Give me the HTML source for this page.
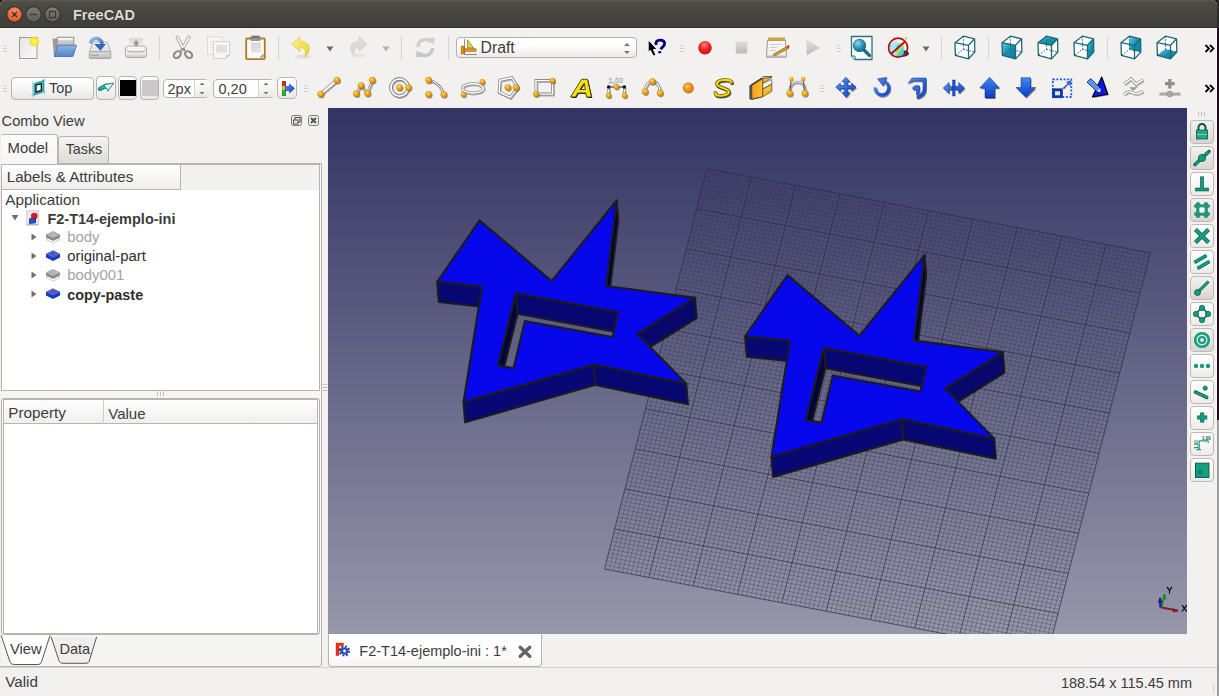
<!DOCTYPE html><html><head><meta charset="utf-8"><style>html,body{margin:0;padding:0;width:1219px;height:696px;overflow:hidden;background:#1f0b17;font-family:"Liberation Sans",sans-serif;}</style></head><body><div style="position:absolute;left:0px;top:0px;width:1217px;height:696px;background:#f2f1f0;border-radius:5px 5px 0 0;overflow:hidden;"></div><div style="position:absolute;left:1217px;top:0px;width:2px;height:28px;background:#2c2b28;"></div><div style="position:absolute;left:1217px;top:420px;width:2px;height:276px;background:#9c9c9c;"></div><div style="position:absolute;left:1216px;top:28px;width:1px;height:392px;background:#fbfbfa;"></div><div style="position:absolute;left:0px;top:0px;width:1217px;height:28px;background:linear-gradient(#5a5750 0px,#5a5750 1px,#4e4c46 2px,#3e3d38);border-radius:5px 5px 0 0;"></div><div style="position:absolute;left:0px;top:27px;width:1217px;height:1px;background:#2e2d2a;"></div><svg style="position:absolute;left:0px;top:0px;overflow:visible" width="70" height="28" viewBox="0 0 70 28"><defs><radialGradient id="tbc" cx="0.5" cy="0.2" r="0.9"><stop offset="0" stop-color="#f58a63"/><stop offset="1" stop-color="#e04f1d"/></radialGradient><linearGradient id="tbg" x1="0" y1="0" x2="0" y2="1"><stop offset="0" stop-color="#7c7b76"/><stop offset="1" stop-color="#5c5b56"/></linearGradient></defs><circle cx="14.5" cy="14.5" r="8.2" fill="#2f2e2a"/><circle cx="14.5" cy="14.5" r="7.2" fill="url(#tbc)"/><path d="M12 12L17 17M17 12L12 17" stroke="#3a2a22" stroke-width="1.2"/><circle cx="33.5" cy="14.5" r="8.2" fill="#2f2e2a"/><circle cx="33.5" cy="14.5" r="7.2" fill="url(#tbg)"/><path d="M30 14.5H37" stroke="#3a3935" stroke-width="1.3"/><circle cx="52.5" cy="14.5" r="8.2" fill="#2f2e2a"/><circle cx="52.5" cy="14.5" r="7.2" fill="url(#tbg)"/><rect x="49.5" y="11.5" width="6" height="6" fill="none" stroke="#3a3935" stroke-width="1.2"/></svg><div style="position:absolute;left:73px;top:7.53px;font-size:14.5px;line-height:14.5px;color:#dfdbd2;white-space:nowrap;font-weight:bold;text-shadow:0 0 1px #222;">FreeCAD</div><div style="position:absolute;left:3px;top:45px;width:4px;height:1px;background:#d3cfc9;"></div><div style="position:absolute;left:3px;top:48px;width:4px;height:1px;background:#d3cfc9;"></div><div style="position:absolute;left:3px;top:51px;width:4px;height:1px;background:#d3cfc9;"></div><svg style="position:absolute;left:15px;top:33px;overflow:visible" width="28" height="28" viewBox="0 0 28 28"><defs><linearGradient id="nd" x1="0" y1="0" x2="1" y2="1"><stop offset="0" stop-color="#e4e4e4"/><stop offset="1" stop-color="#fafafa"/></linearGradient><radialGradient id="glow"><stop offset="0" stop-color="#ffffe0"/><stop offset="0.25" stop-color="#faf040"/><stop offset="0.7" stop-color="#f0e020" stop-opacity="0.85"/><stop offset="1" stop-color="#f0e830" stop-opacity="0"/></radialGradient></defs><rect x="4.5" y="4.5" width="17.5" height="21" fill="url(#nd)" stroke="#9c9c9c" stroke-width="1"/><circle cx="19.3" cy="8.5" r="5.8" fill="url(#glow)"/></svg><svg style="position:absolute;left:48px;top:33px;overflow:visible" width="32" height="28" viewBox="0 0 32 28"><defs><linearGradient id="opp" x1="0" y1="0" x2="0" y2="1"><stop offset="0" stop-color="#e0e0e0"/><stop offset="1" stop-color="#a8a8a8"/></linearGradient><linearGradient id="fo" x1="0" y1="0" x2="0" y2="1"><stop offset="0" stop-color="#8fb4e3"/><stop offset="1" stop-color="#4f86c9"/></linearGradient></defs><path d="M4.5 5.5H9L9 24H6Z" fill="#9a9a9a"/><rect x="9.2" y="4.2" width="16.6" height="12" fill="url(#opp)" stroke="#8a8a8a" stroke-width="0.9"/><rect x="10.2" y="5.2" width="14.6" height="1.5" fill="#fff"/><path d="M6.5 23.5L10 12.2H28.5L25 23.5Z" fill="url(#fo)" stroke="#3f6fb2" stroke-width="0.8"/></svg><svg style="position:absolute;left:86px;top:33px;overflow:visible" width="28" height="28" viewBox="0 0 28 28"><defs><linearGradient id="sv" x1="0" y1="0" x2="0" y2="1"><stop offset="0" stop-color="#fafafa"/><stop offset="1" stop-color="#dcdcdc"/></linearGradient><linearGradient id="sv2" x1="0" y1="0" x2="0" y2="1"><stop offset="0" stop-color="#e8e8e8"/><stop offset="1" stop-color="#b8b8b8"/></linearGradient><linearGradient id="sva" x1="0" y1="0" x2="1" y2="1"><stop offset="0" stop-color="#a0c0e8"/><stop offset="1" stop-color="#3a70bc"/></linearGradient></defs><path d="M7.2 9.2H21.1L24.8 19H3.3Z" fill="url(#sv)" stroke="#a8a8a8" stroke-width="0.9"/><rect x="3.3" y="18.8" width="21.5" height="6.6" rx="1" fill="url(#sv2)" stroke="#9a9a9a" stroke-width="0.9"/><path d="M5 22.2h8" stroke="#a0a0a0" stroke-width="1.2"/><path d="M16 20.5v3.5M18 20.5v3.5M20 20.5v3.5M22 20.5v3.5" stroke="#c8c8c8" stroke-width="0.8"/><path d="M4.5 10.5C5.5 5.5 11.5 3 15.5 8.5L16.2 11" stroke="url(#sva)" stroke-width="3.6" fill="none"/><path d="M8 10.9H20L14.5 17.8Z" fill="#2f6ab8"/></svg><svg style="position:absolute;left:122px;top:33px;overflow:visible" width="28" height="28" viewBox="0 0 28 28"><defs><linearGradient id="pp" x1="0" y1="0" x2="0" y2="1"><stop offset="0" stop-color="#d8d8d8"/><stop offset="1" stop-color="#f4f4f4"/></linearGradient><linearGradient id="pr" x1="0" y1="0" x2="0" y2="1"><stop offset="0" stop-color="#fafafa"/><stop offset="0.6" stop-color="#f0f0f0"/><stop offset="1" stop-color="#c4c4c4"/></linearGradient></defs><rect x="7.2" y="5" width="13.6" height="9.5" fill="url(#pp)"/><path d="M14.1 7L17.4 10.6H15.8V14H12.4V10.6H10.8Z" fill="#9a9a9a"/><rect x="3.3" y="13.1" width="21.2" height="11.4" rx="3" fill="url(#pr)" stroke="#a5a5a5" stroke-width="0.9"/><path d="M5.5 16.5Q5.5 18.8 8 18.8H20Q22.5 18.8 22.5 16.5" stroke="#9a9a9a" stroke-width="0.9" fill="none"/></svg><div style="position:absolute;left:159px;top:36px;width:1px;height:24px;background:#d8d4ce;"></div><svg style="position:absolute;left:168px;top:33px;overflow:visible" width="30" height="28" viewBox="0 0 30 28"><path d="M9.3 4.2L15.6 16.5M21 4.2L14 16.5" stroke="#a0a0a0" stroke-width="3.4" stroke-linecap="round"/><path d="M9.3 4.2L15.6 16.5M21 4.2L14 16.5" stroke="#f4f4f4" stroke-width="1.8" stroke-linecap="round"/><ellipse cx="9.3" cy="21.6" rx="4" ry="2.9" transform="rotate(-40 9.3 21.6)" fill="none" stroke="#8c8c8c" stroke-width="2.1"/><ellipse cx="20.6" cy="21.6" rx="4" ry="2.9" transform="rotate(40 20.6 21.6)" fill="none" stroke="#8c8c8c" stroke-width="2.1"/><path d="M13 17.5L15 15.5L17 17.5" stroke="#8c8c8c" stroke-width="1.6" fill="none"/></svg><svg style="position:absolute;left:203px;top:33px;overflow:visible" width="30" height="30" viewBox="0 0 30 30"><rect x="4.5" y="3.8" width="15" height="17.5" fill="#f6f6f6" stroke="#dadada" stroke-width="1"/><path d="M7 8.5H13M7 10.5H13M7 12.5H13M7 14.5H13M7 16.5H13" stroke="#dedede" stroke-width="0.8"/><path d="M10.5 8.5H26.5V22L23 25.5H10.5Z" fill="#f7f7f7" stroke="#d2d2d2" stroke-width="1"/><rect x="13" y="12" width="11" height="7.5" fill="#e0e0e0"/><path d="M23 25.5V22H26.5Z" fill="#c8c8c8"/></svg><svg style="position:absolute;left:241px;top:33px;overflow:visible" width="28" height="28" viewBox="0 0 28 28"><defs><linearGradient id="clp" x1="0" y1="0" x2="0" y2="1"><stop offset="0" stop-color="#6c6c64"/><stop offset="1" stop-color="#a8a8a0"/></linearGradient></defs><rect x="5.2" y="5.5" width="18.6" height="20.6" rx="0.8" fill="#fafafa" stroke="#b37a22" stroke-width="1.8"/><rect x="10" y="9.5" width="10" height="10" fill="#e2e2e2"/><path d="M10 10.5H19M10 12.5H19M10 14.5H19M10 16.5H16" stroke="#d0d0d0" stroke-width="0.7"/><path d="M18.5 24.5L22.5 20.5V24.5Z" fill="#9a9a9a"/><path d="M10 7.5V4.5Q10 3 11.5 3H17.5Q19 3 19 4.5V7.5Z" fill="url(#clp)" stroke="#707068" stroke-width="0.6"/></svg><div style="position:absolute;left:278px;top:36px;width:1px;height:24px;background:#d8d4ce;"></div><svg style="position:absolute;left:288px;top:33px;overflow:visible" width="26" height="28" viewBox="0 0 26 28"><defs><linearGradient id="un" x1="0" y1="0" x2="1" y2="1"><stop offset="0" stop-color="#fff5a0"/><stop offset="1" stop-color="#e8d020"/></linearGradient></defs><ellipse cx="15" cy="23.5" rx="8" ry="2" fill="#000" opacity="0.08"/><path d="M12 8.5C19 8.5 22 12 21 17.5C20.5 20 19 22 17 23.5C18 20.5 18 17 15 15C13.5 14 12.5 14 12 14V18.5L4 11.2L12 4Z" fill="url(#un)" stroke="#d8c020" stroke-width="0.6"/></svg><svg style="position:absolute;left:325px;top:45px;overflow:visible" width="10" height="8" viewBox="0 0 10 8"><path d="M1.5 1.5H8.5L5 6.5Z" fill="#6a6a6a"/></svg><svg style="position:absolute;left:346px;top:33px;overflow:visible" width="26" height="28" viewBox="0 0 26 28"><ellipse cx="12" cy="22.5" rx="7" ry="2" fill="#000" opacity="0.05"/><path d="M13 8.5C7 8.5 4 12 5 17C5.5 19 6.5 20.5 8 21.5C7.5 19 8 16.5 10 15C11 14.3 12.5 14 13 14V18L21 11.2L13 4Z" fill="#d9d9d9" stroke="#c9c9c9" stroke-width="0.6"/></svg><svg style="position:absolute;left:381px;top:45px;overflow:visible" width="10" height="8" viewBox="0 0 10 8"><path d="M1.5 1.5H8.5L5 6.5Z" fill="#b0b0b0"/></svg><div style="position:absolute;left:401px;top:36px;width:1px;height:24px;background:#d8d4ce;"></div><svg style="position:absolute;left:412px;top:33px;overflow:visible" width="26" height="28" viewBox="0 0 26 28"><path d="M6 14A7.5 7.5 0 0 1 19.5 9.5" stroke="#cfcfcf" stroke-width="3.4" fill="none"/><path d="M16 5.5L23 4.5L22 11.5Z" fill="#cfcfcf"/><path d="M20.5 15A7.5 7.5 0 0 1 7 19.5" stroke="#c6c6c6" stroke-width="3.4" fill="none"/><path d="M10.5 23.5L3.5 24.5L4.5 17.5Z" fill="#c6c6c6"/></svg><div style="position:absolute;left:448px;top:36px;width:1px;height:24px;background:#d8d4ce;"></div><div style="position:absolute;left:455.5px;top:36.7px;width:181px;height:21.8px;box-sizing:border-box;border:1px solid #b4afa8;border-radius:4px;background:linear-gradient(#ffffff,#ffffff 40%,#eceae7);"></div><svg style="position:absolute;left:455px;top:36px;overflow:visible" width="30" height="24" viewBox="0 0 30 24"><path d="M9.5 3V18.5H21.7" stroke="#8a8a8a" stroke-width="1" fill="none"/><path d="M12.4 3.8V11.9H18.6Z" fill="#f0dc28" stroke="#7a6a08" stroke-width="0.7"/><path d="M13.6 7.5V10.8H16.2Z" fill="#c8c8b0"/><rect x="6.2" y="10.2" width="2.9" height="7.6" fill="#f09a10" stroke="#8a5008" stroke-width="0.6"/><rect x="9" y="12.8" width="12" height="2.4" fill="#f09a10" stroke="#8a5008" stroke-width="0.6"/></svg><div style="position:absolute;left:480.5px;top:39.63px;font-size:15.8px;line-height:15.8px;color:#3c3c3c;white-space:nowrap;">Draft</div><svg style="position:absolute;left:622px;top:39px;overflow:visible" width="12" height="18" viewBox="0 0 12 18"><path d="M2 7L5 4L8 7Z" fill="#777"/><path d="M2 12L5 15L8 12Z" fill="#777"/></svg><svg style="position:absolute;left:642px;top:36px;overflow:visible" width="30" height="24" viewBox="0 0 30 24"><path d="M6.2 3.8V16.5L8.3 14.2L11.2 20L14 19.2L11.4 13.6L15 13.2Z" fill="#000" stroke="#fff" stroke-width="0.9" stroke-linejoin="round"/><path d="M14.2 9C13.4 6 14.8 4.2 18 4.2C21 4.2 22.6 5.8 22.6 7.8C22.6 10 20 11 18.6 13.3" fill="none" stroke="#000080" stroke-width="2.8"/><rect x="16.2" y="15.2" width="3" height="2" fill="#000080"/></svg><div style="position:absolute;left:680px;top:45px;width:4px;height:1px;background:#d3cfc9;"></div><div style="position:absolute;left:680px;top:48px;width:4px;height:1px;background:#d3cfc9;"></div><div style="position:absolute;left:680px;top:51px;width:4px;height:1px;background:#d3cfc9;"></div><svg style="position:absolute;left:694px;top:37px;overflow:visible" width="22" height="22" viewBox="0 0 22 22"><defs><radialGradient id="rec" cx="0.45" cy="0.3" r="0.75"><stop offset="0" stop-color="#ff8080"/><stop offset="0.5" stop-color="#ee2222"/><stop offset="1" stop-color="#c81010"/></radialGradient></defs><circle cx="11" cy="10.7" r="6.8" fill="url(#rec)"/></svg><svg style="position:absolute;left:733px;top:39px;overflow:visible" width="16" height="17" viewBox="0 0 16 17"><defs><linearGradient id="stp" x1="0" y1="0" x2="0" y2="1"><stop offset="0" stop-color="#dedede"/><stop offset="1" stop-color="#b8b8b8"/></linearGradient></defs><rect x="3" y="3" width="11" height="11.5" fill="url(#stp)" stroke="#cfcfcf" stroke-width="0.6"/></svg><svg style="position:absolute;left:763px;top:34px;overflow:visible" width="28" height="28" viewBox="0 0 28 28"><path d="M4.5 6.5H22.5L23.5 22.5H3.5Z" fill="#f4f4f4" stroke="#9a9a9a" stroke-width="1"/><rect x="3" y="21.5" width="21" height="2.5" fill="#b8b8b8"/><rect x="5" y="3.5" width="17" height="3" fill="#c8a830"/><path d="M7 10.5H19M7 13.5H14M7 16.5H13" stroke="#cfcfcf" stroke-width="1"/><path d="M10 20.5L24 12.5L25.5 14.5L11.5 22Z" fill="#e0a020" stroke="#8a5a10" stroke-width="0.7"/><path d="M23.5 12.3L25.8 11L26.8 13L25 14.3Z" fill="#e03030"/></svg><svg style="position:absolute;left:804px;top:38px;overflow:visible" width="18" height="20" viewBox="0 0 18 20"><defs><linearGradient id="ply" x1="0" y1="0" x2="0" y2="1"><stop offset="0" stop-color="#e4e4e4"/><stop offset="1" stop-color="#b4b4b4"/></linearGradient></defs><path d="M3 2.7V16.9L15.4 9.8Z" fill="url(#ply)" stroke="#c8c8c8" stroke-width="0.6"/></svg><div style="position:absolute;left:837px;top:45px;width:4px;height:1px;background:#d3cfc9;"></div><div style="position:absolute;left:837px;top:48px;width:4px;height:1px;background:#d3cfc9;"></div><div style="position:absolute;left:837px;top:51px;width:4px;height:1px;background:#d3cfc9;"></div><svg style="position:absolute;left:848px;top:33px;overflow:visible" width="28" height="30" viewBox="0 0 28 30"><defs><radialGradient id="mg" cx="0.35" cy="0.3" r="0.8"><stop offset="0" stop-color="#8fd8f0"/><stop offset="0.6" stop-color="#1c8eb4"/><stop offset="1" stop-color="#0d6888"/></radialGradient></defs><path d="M3.5 3.5H24V26.5H7L3.5 23Z" fill="#fff" stroke="#2a6f82" stroke-width="1.3"/><path d="M3.5 23H7V26.5" fill="#fff" stroke="#2a6f82" stroke-width="1"/><path d="M16 17L21.5 22.5" stroke="#1b6d85" stroke-width="3.2" stroke-linecap="round"/><circle cx="11.5" cy="12.5" r="6.2" fill="url(#mg)" stroke="#145a6e" stroke-width="0.8"/></svg><svg style="position:absolute;left:884px;top:34px;overflow:visible" width="30" height="28" viewBox="0 0 30 28"><ellipse cx="19" cy="19.5" rx="6" ry="3.2" fill="#1a2a30" opacity="0.9"/><path d="M6 9.5L11.5 7.5L19.5 9.8V21.5L13 23.5L6 20.5Z" fill="#a8eaf2"/><path d="M12.5 11V23.3L19.5 21.5V9.8Z" fill="#34d8e6"/><path d="M6 12L12 13.5" stroke="#70b8c0" stroke-width="0.6" stroke-dasharray="1 1"/><path d="M12.5 20.5L20 9" stroke="#f2d820" stroke-width="2.2"/><circle cx="22" cy="4.3" r="1" fill="#e8a030"/><circle cx="14.1" cy="13.7" r="9.5" fill="none" stroke="#b20e0e" stroke-width="1.7"/><path d="M7.5 19.5L20.8 7.8" stroke="#b20e0e" stroke-width="1.8"/></svg><svg style="position:absolute;left:921px;top:45px;overflow:visible" width="10" height="8" viewBox="0 0 10 8"><path d="M1.5 1.5H8.5L5 6.5Z" fill="#6a6a6a"/></svg><div style="position:absolute;left:941px;top:36px;width:1px;height:24px;background:#d8d4ce;"></div><svg style="position:absolute;left:950px;top:33px;overflow:visible" width="30" height="30" viewBox="0 0 30 30"><defs><linearGradient id="cg950" x1="0" y1="0" x2="1" y2="1"><stop offset="0" stop-color="#6cc8ea"/><stop offset="0.5" stop-color="#1590ae"/><stop offset="1" stop-color="#0a7f99"/></linearGradient></defs><polygon points="13.4,3.2 24.6,5.8 24.8,19.0 18.5,25.9 5.4,22.4 5.0,9.7" fill="#fff"/><polyline points="5.0,9.7 13.4,3.2 24.6,5.8 24.8,19.0 18.5,25.9 5.4,22.4 5.0,9.7 18.5,12.3 24.6,5.8" stroke="#1f6676" stroke-width="1.3" fill="none" stroke-linejoin="round"/><polyline points="18.5,12.3 18.5,25.9" stroke="#1f6676" stroke-width="1.3" fill="none" stroke-linejoin="round"/><path d="M13.4 3.2V16.4L5.4 22.4M13.4 16.4L24.8 19" stroke="#1f6676" stroke-width="1" stroke-dasharray="1.6 1.4" fill="none"/></svg><div style="position:absolute;left:988px;top:36px;width:1px;height:24px;background:#d8d4ce;"></div><svg style="position:absolute;left:997px;top:33px;overflow:visible" width="30" height="30" viewBox="0 0 30 30"><defs><linearGradient id="cg997" x1="0" y1="0" x2="1" y2="1"><stop offset="0" stop-color="#6cc8ea"/><stop offset="0.5" stop-color="#1590ae"/><stop offset="1" stop-color="#0a7f99"/></linearGradient></defs><polygon points="13.4,3.2 24.6,5.8 24.8,19.0 18.5,25.9 5.4,22.4 5.0,9.7" fill="#fff"/><polygon points="5.0,9.7 18.5,12.3 18.5,25.9 5.4,22.4" fill="url(#cg997)"/><polyline points="5.0,9.7 13.4,3.2 24.6,5.8 24.8,19.0 18.5,25.9 5.4,22.4 5.0,9.7 18.5,12.3 24.6,5.8" stroke="#1f6676" stroke-width="1.3" fill="none" stroke-linejoin="round"/><polyline points="18.5,12.3 18.5,25.9" stroke="#1f6676" stroke-width="1.3" fill="none" stroke-linejoin="round"/><path d="M13.4 3.2V16.4L5.4 22.4M13.4 16.4L24.8 19" stroke="#1f6676" stroke-width="1" stroke-dasharray="1.6 1.4" fill="none"/></svg><svg style="position:absolute;left:1033px;top:33px;overflow:visible" width="30" height="30" viewBox="0 0 30 30"><defs><linearGradient id="cg1033" x1="0" y1="0" x2="1" y2="1"><stop offset="0" stop-color="#6cc8ea"/><stop offset="0.5" stop-color="#1590ae"/><stop offset="1" stop-color="#0a7f99"/></linearGradient></defs><polygon points="13.4,3.2 24.6,5.8 24.8,19.0 18.5,25.9 5.4,22.4 5.0,9.7" fill="#fff"/><polygon points="13.4,3.2 24.6,5.8 18.5,12.3 5.0,9.7" fill="url(#cg1033)"/><polyline points="5.0,9.7 13.4,3.2 24.6,5.8 24.8,19.0 18.5,25.9 5.4,22.4 5.0,9.7 18.5,12.3 24.6,5.8" stroke="#1f6676" stroke-width="1.3" fill="none" stroke-linejoin="round"/><polyline points="18.5,12.3 18.5,25.9" stroke="#1f6676" stroke-width="1.3" fill="none" stroke-linejoin="round"/><path d="M13.4 3.2V16.4L5.4 22.4M13.4 16.4L24.8 19" stroke="#1f6676" stroke-width="1" stroke-dasharray="1.6 1.4" fill="none"/></svg><svg style="position:absolute;left:1069px;top:33px;overflow:visible" width="30" height="30" viewBox="0 0 30 30"><defs><linearGradient id="cg1069" x1="0" y1="0" x2="1" y2="1"><stop offset="0" stop-color="#6cc8ea"/><stop offset="0.5" stop-color="#1590ae"/><stop offset="1" stop-color="#0a7f99"/></linearGradient></defs><polygon points="13.4,3.2 24.6,5.8 24.8,19.0 18.5,25.9 5.4,22.4 5.0,9.7" fill="#fff"/><polygon points="18.5,12.3 24.6,5.8 24.8,19.0 18.5,25.9" fill="url(#cg1069)"/><polyline points="5.0,9.7 13.4,3.2 24.6,5.8 24.8,19.0 18.5,25.9 5.4,22.4 5.0,9.7 18.5,12.3 24.6,5.8" stroke="#1f6676" stroke-width="1.3" fill="none" stroke-linejoin="round"/><polyline points="18.5,12.3 18.5,25.9" stroke="#1f6676" stroke-width="1.3" fill="none" stroke-linejoin="round"/><path d="M13.4 3.2V16.4L5.4 22.4M13.4 16.4L24.8 19" stroke="#1f6676" stroke-width="1" stroke-dasharray="1.6 1.4" fill="none"/></svg><div style="position:absolute;left:1107px;top:36px;width:1px;height:24px;background:#d8d4ce;"></div><svg style="position:absolute;left:1116px;top:33px;overflow:visible" width="30" height="30" viewBox="0 0 30 30"><defs><linearGradient id="cg1116" x1="0" y1="0" x2="1" y2="1"><stop offset="0" stop-color="#6cc8ea"/><stop offset="0.5" stop-color="#1590ae"/><stop offset="1" stop-color="#0a7f99"/></linearGradient></defs><polygon points="13.4,3.2 24.6,5.8 24.8,19.0 18.5,25.9 5.4,22.4 5.0,9.7" fill="#fff"/><polygon points="13.4,3.2 24.6,5.8 24.8,19.0 13.4,16.4" fill="url(#cg1116)"/><polyline points="5.0,9.7 13.4,3.2 24.6,5.8 24.8,19.0 18.5,25.9 5.4,22.4 5.0,9.7 18.5,12.3 24.6,5.8" stroke="#1f6676" stroke-width="1.3" fill="none" stroke-linejoin="round"/><polyline points="18.5,12.3 18.5,25.9" stroke="#1f6676" stroke-width="1.3" fill="none" stroke-linejoin="round"/><path d="M13.4 3.2V16.4L5.4 22.4M13.4 16.4L24.8 19" stroke="#1f6676" stroke-width="1" stroke-dasharray="1.6 1.4" fill="none"/></svg><svg style="position:absolute;left:1152px;top:33px;overflow:visible" width="30" height="30" viewBox="0 0 30 30"><defs><linearGradient id="cg1152" x1="0" y1="0" x2="1" y2="1"><stop offset="0" stop-color="#6cc8ea"/><stop offset="0.5" stop-color="#1590ae"/><stop offset="1" stop-color="#0a7f99"/></linearGradient></defs><polygon points="13.4,3.2 24.6,5.8 24.8,19.0 18.5,25.9 5.4,22.4 5.0,9.7" fill="#fff"/><polygon points="5.4,22.4 18.5,25.9 24.8,19.0 13.4,16.4" fill="url(#cg1152)"/><polyline points="5.0,9.7 13.4,3.2 24.6,5.8 24.8,19.0 18.5,25.9 5.4,22.4 5.0,9.7 18.5,12.3 24.6,5.8" stroke="#1f6676" stroke-width="1.3" fill="none" stroke-linejoin="round"/><polyline points="18.5,12.3 18.5,25.9" stroke="#1f6676" stroke-width="1.3" fill="none" stroke-linejoin="round"/><path d="M13.4 3.2V16.4L5.4 22.4M13.4 16.4L24.8 19" stroke="#1f6676" stroke-width="1" stroke-dasharray="1.6 1.4" fill="none"/></svg><svg style="position:absolute;left:1204px;top:43px;overflow:visible" width="12" height="12" viewBox="0 0 12 12"><path d="M1.5 2L5 5.5L1.5 9M6 2L9.5 5.5L6 9" stroke="#000" stroke-width="1.8" fill="none"/></svg><svg style="position:absolute;left:0px;top:0px;overflow:visible" width="1" height="1" viewBox="0 0 1 1"><defs><radialGradient id="ball" cx="0.38" cy="0.32" r="0.7"><stop offset="0" stop-color="#ffe8a0"/><stop offset="0.35" stop-color="#fbb41c"/><stop offset="1" stop-color="#d88a00"/></radialGradient><linearGradient id="blu" x1="0" y1="0" x2="1" y2="1"><stop offset="0" stop-color="#5a9af5"/><stop offset="1" stop-color="#0a3fd0"/></linearGradient><linearGradient id="blu2" x1="0" y1="0" x2="0" y2="1"><stop offset="0" stop-color="#3f8cf4"/><stop offset="1" stop-color="#0a3ac4"/></linearGradient></defs></svg><div style="position:absolute;left:3px;top:85px;width:4px;height:1px;background:#d3cfc9;"></div><div style="position:absolute;left:3px;top:88px;width:4px;height:1px;background:#d3cfc9;"></div><div style="position:absolute;left:3px;top:91px;width:4px;height:1px;background:#d3cfc9;"></div><div style="position:absolute;left:11px;top:76.5px;width:82.5px;height:23px;box-sizing:border-box;border:1px solid #b9b4ad;border-radius:4px;background:linear-gradient(#ffffff,#f7f6f5 50%,#e9e7e4);"></div><svg style="position:absolute;left:28px;top:77px;overflow:visible" width="20" height="22" viewBox="0 0 20 22"><path d="M6 6.5L15.5 3.5V15L6 18Z" fill="#2cc0d0" stroke="#1a8a9a" stroke-width="0.8"/><path d="M8 8.2L13.3 6.6V13.4L8 15Z" fill="#fff" stroke="#111" stroke-width="1.3"/><path d="M4.5 4.5V20.5M16.5 1.5V17.5M3 18.5H7M14 3H18" stroke="#3fa0b0" stroke-width="0.6" opacity="0.7"/></svg><div style="position:absolute;left:49px;top:80.83px;font-size:14.5px;line-height:14.5px;color:#3c3c3c;white-space:nowrap;">Top</div><div style="position:absolute;left:96.2px;top:76.3px;width:19.4px;height:23.3px;box-sizing:border-box;border:1px solid #b9b4ad;border-radius:4px;background:linear-gradient(#ffffff,#f7f6f5 50%,#e9e7e4);"></div><svg style="position:absolute;left:96px;top:76px;overflow:visible" width="20" height="24" viewBox="0 0 20 24"><path d="M4 12.8L10.5 9.6" stroke="#0a5a50" stroke-width="4.2" stroke-linecap="round"/><path d="M4 12.8L10.5 9.6" stroke="#12b8a8" stroke-width="2.8" stroke-linecap="round"/><path d="M8 8.6L17.7 7L11.9 15.2L11 12.6L9.4 12Z" fill="#d2f4ee" stroke="#1a7a70" stroke-width="0.9" stroke-linejoin="round"/></svg><div style="position:absolute;left:118.3px;top:76.3px;width:19.2px;height:23.3px;box-sizing:border-box;border:1px solid #b9b4ad;border-radius:4px;background:linear-gradient(#ffffff,#f7f6f5 50%,#e9e7e4);"></div><div style="position:absolute;left:120.2px;top:80px;width:15.6px;height:15.8px;background:#000;"></div><div style="position:absolute;left:140.3px;top:76.3px;width:19.2px;height:23.3px;box-sizing:border-box;border:1px solid #b9b4ad;border-radius:4px;background:linear-gradient(#ffffff,#f7f6f5 50%,#e9e7e4);"></div><div style="position:absolute;left:142.3px;top:80px;width:15.4px;height:15.8px;background:#c9c9c9;"></div><div style="position:absolute;left:163px;top:78.6px;width:46px;height:19px;box-sizing:border-box;border:1px solid #b9b4ad;border-radius:4px;background:#fff;"></div><div style="position:absolute;left:194px;top:79.6px;width:14px;height:17px;background:linear-gradient(#ffffff,#ebe9e6);border-left:1px solid #d6d2cc;border-radius:0 3px 3px 0;"></div><div style="position:absolute;left:167.5px;top:82.13px;font-size:14.5px;line-height:14.5px;color:#3c3c3c;white-space:nowrap;">2px</div><svg style="position:absolute;left:196.5px;top:80px;overflow:visible" width="10" height="17" viewBox="0 0 10 17"><path d="M2.5 5L5 2.5L7.5 5Z" fill="#777"/><path d="M2.5 12L5 14.5L7.5 12Z" fill="#777"/></svg><div style="position:absolute;left:212.5px;top:78.6px;width:61.5px;height:19px;box-sizing:border-box;border:1px solid #b9b4ad;border-radius:4px;background:#fff;"></div><div style="position:absolute;left:258.3px;top:79.6px;width:14.699999999999989px;height:17px;background:linear-gradient(#ffffff,#ebe9e6);border-left:1px solid #d6d2cc;border-radius:0 3px 3px 0;"></div><div style="position:absolute;left:218.5px;top:82.13px;font-size:14.5px;line-height:14.5px;color:#3c3c3c;white-space:nowrap;">0,20</div><svg style="position:absolute;left:261.15px;top:80px;overflow:visible" width="10" height="17" viewBox="0 0 10 17"><path d="M2.5 5L5 2.5L7.5 5Z" fill="#777"/><path d="M2.5 12L5 14.5L7.5 12Z" fill="#777"/></svg><div style="position:absolute;left:277px;top:76.6px;width:19.7px;height:22.7px;box-sizing:border-box;border:1px solid #b9b4ad;border-radius:4px;background:linear-gradient(#ffffff,#f7f6f5 50%,#e9e7e4);"></div><svg style="position:absolute;left:277px;top:76.6px;overflow:visible" width="20" height="23" viewBox="0 0 20 23"><rect x="5" y="4" width="4" height="15" fill="#555"/><rect x="5.5" y="4.5" width="3" height="4.5" fill="#e02020"/><rect x="5.5" y="9" width="3" height="4" fill="#f0e020"/><rect x="5.5" y="13" width="3" height="5.5" fill="#20c020"/><path d="M8 9.5H12.5V7L17.5 11.5L12.5 16V13.5H8Z" fill="url(#blu)" stroke="#1a3a90" stroke-width="0.6"/></svg><div style="position:absolute;left:304px;top:85px;width:4px;height:1px;background:#d3cfc9;"></div><div style="position:absolute;left:304px;top:88px;width:4px;height:1px;background:#d3cfc9;"></div><div style="position:absolute;left:304px;top:91px;width:4px;height:1px;background:#d3cfc9;"></div><svg style="position:absolute;left:0;top:0;overflow:visible" width="830" height="110"><defs><radialGradient id="pt" cx="0.4" cy="0.35" r="0.7"><stop offset="0" stop-color="#ffd090"/><stop offset="0.5" stop-color="#f89010"/><stop offset="1" stop-color="#e07000"/></radialGradient><linearGradient id="fb" x1="0" y1="0" x2="1" y2="0"><stop offset="0" stop-color="#f0a020"/><stop offset="1" stop-color="#ffc030"/></linearGradient><linearGradient id="fb2" x1="0" y1="0" x2="1" y2="1"><stop offset="0" stop-color="#ffd050"/><stop offset="1" stop-color="#f0a010"/></linearGradient></defs><path d="M320.7 94.1L337 80.2" stroke="#555" stroke-opacity="0.45" stroke-width="3.8" fill="none" transform="translate(0.8,1)"/><path d="M320.7 94.1L337 80.2" stroke="#8a8a8a" stroke-width="3.8" fill="none"/><path d="M320.7 94.1L337 80.2" stroke="#fff" stroke-width="2.2" fill="none"/><circle cx="321.6" cy="95.2" r="3.1" fill="#444" opacity="0.55"/><circle cx="320.7" cy="94.1" r="3.1" fill="url(#ball)" stroke="#c07800" stroke-width="0.4"/><circle cx="337.9" cy="81.3" r="3.1" fill="#444" opacity="0.55"/><circle cx="337.0" cy="80.2" r="3.1" fill="url(#ball)" stroke="#c07800" stroke-width="0.4"/><path d="M356.4 93.7L361 85.5L367.5 93.3L372.4 80.2" stroke="#555" stroke-opacity="0.45" stroke-width="2.6" fill="none" transform="translate(0.8,1)"/><path d="M356.4 93.7L361 85.5L367.5 93.3L372.4 80.2" stroke="#8a8a8a" stroke-width="2.6" fill="none"/><path d="M356.4 93.7L361 85.5L367.5 93.3L372.4 80.2" stroke="#fff" stroke-width="1.0" fill="none"/><circle cx="357.3" cy="94.8" r="3.1" fill="#444" opacity="0.55"/><circle cx="356.4" cy="93.7" r="3.1" fill="url(#ball)" stroke="#c07800" stroke-width="0.4"/><circle cx="361.9" cy="86.6" r="3.1" fill="#444" opacity="0.55"/><circle cx="361.0" cy="85.5" r="3.1" fill="url(#ball)" stroke="#c07800" stroke-width="0.4"/><circle cx="368.4" cy="94.4" r="3.1" fill="#444" opacity="0.55"/><circle cx="367.5" cy="93.3" r="3.1" fill="url(#ball)" stroke="#c07800" stroke-width="0.4"/><circle cx="373.3" cy="81.3" r="3.1" fill="#444" opacity="0.55"/><circle cx="372.4" cy="80.2" r="3.1" fill="url(#ball)" stroke="#c07800" stroke-width="0.4"/><circle cx="400.3" cy="88.5" r="8.6" stroke="#555" stroke-opacity="0.45" stroke-width="3.6" fill="none"/><circle cx="399.5" cy="87.5" r="8.6" stroke="#808080" stroke-width="3.6" fill="none"/><circle cx="399.5" cy="87.5" r="8.6" stroke="#fff" stroke-width="1.8" fill="none"/><circle cx="400.4" cy="88.6" r="3.1" fill="#444" opacity="0.55"/><circle cx="399.5" cy="87.5" r="3.1" fill="url(#ball)" stroke="#c07800" stroke-width="0.4"/><circle cx="409.4" cy="88.6" r="3.1" fill="#444" opacity="0.55"/><circle cx="408.5" cy="87.5" r="3.1" fill="url(#ball)" stroke="#c07800" stroke-width="0.4"/><path d="M428.6 80.2Q440 82 443.8 94.5" stroke="#555" stroke-opacity="0.45" stroke-width="2.6" fill="none" transform="translate(0.8,1)"/><path d="M428.6 80.2Q440 82 443.8 94.5" stroke="#8a8a8a" stroke-width="2.6" fill="none"/><path d="M428.6 80.2Q440 82 443.8 94.5" stroke="#fff" stroke-width="1.0" fill="none"/><circle cx="429.5" cy="81.3" r="3.1" fill="#444" opacity="0.55"/><circle cx="428.6" cy="80.2" r="3.1" fill="url(#ball)" stroke="#c07800" stroke-width="0.4"/><circle cx="429.5" cy="95.4" r="3.1" fill="#444" opacity="0.55"/><circle cx="428.6" cy="94.3" r="3.1" fill="url(#ball)" stroke="#c07800" stroke-width="0.4"/><circle cx="444.7" cy="95.6" r="3.1" fill="#444" opacity="0.55"/><circle cx="443.8" cy="94.5" r="3.1" fill="url(#ball)" stroke="#c07800" stroke-width="0.4"/><ellipse cx="473.6" cy="89.3" rx="10.5" ry="4.6" stroke="#555" stroke-opacity="0.45" stroke-width="3" fill="none"/><ellipse cx="472.9" cy="88.4" rx="10.5" ry="4.6" stroke="#8a8a8a" stroke-width="3" fill="none"/><ellipse cx="472.9" cy="88.4" rx="10.5" ry="4.6" stroke="#fff" stroke-width="1.5" fill="none"/><circle cx="483.2" cy="82.9" r="2.6" fill="#444" opacity="0.55"/><circle cx="482.3" cy="81.8" r="2.6" fill="url(#ball)" stroke="#c07800" stroke-width="0.4"/><circle cx="464.4" cy="95.6" r="2.6" fill="#444" opacity="0.55"/><circle cx="463.5" cy="94.5" r="2.6" fill="url(#ball)" stroke="#c07800" stroke-width="0.4"/><path d="M500 80.2L511.5 77.7L518 87.5L510.2 97.4L499.2 92Z" stroke="#555" stroke-opacity="0.45" stroke-width="3.0" fill="none" transform="translate(0.8,1)"/><path d="M500 80.2L511.5 77.7L518 87.5L510.2 97.4L499.2 92Z" stroke="#8a8a8a" stroke-width="3.0" fill="none"/><path d="M500 80.2L511.5 77.7L518 87.5L510.2 97.4L499.2 92Z" stroke="#fff" stroke-width="1.4" fill="none"/><circle cx="508.7" cy="88.6" r="3.1" fill="#444" opacity="0.55"/><circle cx="507.8" cy="87.5" r="3.1" fill="url(#ball)" stroke="#c07800" stroke-width="0.4"/><circle cx="516.9" cy="88.6" r="3.1" fill="#444" opacity="0.55"/><circle cx="516.0" cy="87.5" r="3.1" fill="url(#ball)" stroke="#c07800" stroke-width="0.4"/><path d="M536 80.6H552.6V94.1H536Z" stroke="#555" stroke-opacity="0.45" stroke-width="3.0" fill="none" transform="translate(0.8,1)"/><path d="M536 80.6H552.6V94.1H536Z" stroke="#8a8a8a" stroke-width="3.0" fill="none"/><path d="M536 80.6H552.6V94.1H536Z" stroke="#fff" stroke-width="1.4" fill="none"/><circle cx="553.5" cy="81.7" r="2.7" fill="#444" opacity="0.55"/><circle cx="552.6" cy="80.6" r="2.7" fill="url(#ball)" stroke="#c07800" stroke-width="0.4"/><circle cx="537.0" cy="95.2" r="2.7" fill="#444" opacity="0.55"/><circle cx="536.1" cy="94.1" r="2.7" fill="url(#ball)" stroke="#c07800" stroke-width="0.4"/><path d="M570.5 97L581.5 79.3H587.5L591.5 97H586.5L585.8 93H577.8L575.5 97Z M579.8 89.5H585.2L584.3 83.2Z" fill="#333" fill-rule="evenodd" transform="translate(0.9,0.9)"/><path d="M570.5 97L581.5 79.3H587.5L591.5 97H586.5L585.8 93H577.8L575.5 97Z M579.8 89.5H585.2L584.3 83.2Z" fill="#f8e010" fill-rule="evenodd" stroke="#2a2a10" stroke-width="0.8" stroke-linejoin="round"/><text x="608.5" y="83.3" font-size="7.5" font-weight="bold" fill="#fff" stroke="#999" stroke-width="0.4" font-family="Liberation Sans">1,00</text><path d="M608.7 87V95.5M624.3 87V95.5" stroke="#555" stroke-opacity="0.45" stroke-width="2.6" fill="none" transform="translate(0.8,1)"/><path d="M608.7 87V95.5M624.3 87V95.5" stroke="#8a8a8a" stroke-width="2.6" fill="none"/><path d="M608.7 87V95.5M624.3 87V95.5" stroke="#fff" stroke-width="1.0" fill="none"/><path d="M608.7 87H624.3" stroke="#444" stroke-width="1.2"/><circle cx="608.7" cy="87" r="1.8" fill="#111"/><circle cx="624.3" cy="87" r="1.8" fill="#111"/><circle cx="617.3" cy="87.8" r="2.6" fill="#444" opacity="0.55"/><circle cx="616.4" cy="86.7" r="2.6" fill="url(#ball)" stroke="#c07800" stroke-width="0.4"/><circle cx="609.6" cy="96.6" r="2.6" fill="#444" opacity="0.55"/><circle cx="608.7" cy="95.5" r="2.6" fill="url(#ball)" stroke="#c07800" stroke-width="0.4"/><circle cx="625.5" cy="96.6" r="2.6" fill="#444" opacity="0.55"/><circle cx="624.6" cy="95.5" r="2.6" fill="url(#ball)" stroke="#c07800" stroke-width="0.4"/><path d="M645.1 91.6C645 84 650 81.5 652.4 81.5C656 81.5 660 85 660.1 93" stroke="#555" stroke-opacity="0.45" stroke-width="2.8" fill="none" transform="translate(0.8,1)"/><path d="M645.1 91.6C645 84 650 81.5 652.4 81.5C656 81.5 660 85 660.1 93" stroke="#8a8a8a" stroke-width="2.8" fill="none"/><path d="M645.1 91.6C645 84 650 81.5 652.4 81.5C656 81.5 660 85 660.1 93" stroke="#fff" stroke-width="1.2" fill="none"/><circle cx="653.3" cy="82.6" r="3.1" fill="#444" opacity="0.55"/><circle cx="652.4" cy="81.5" r="3.1" fill="url(#ball)" stroke="#c07800" stroke-width="0.4"/><circle cx="646.0" cy="92.7" r="3.1" fill="#444" opacity="0.55"/><circle cx="645.1" cy="91.6" r="3.1" fill="url(#ball)" stroke="#c07800" stroke-width="0.4"/><circle cx="661.0" cy="94.1" r="3.1" fill="#444" opacity="0.55"/><circle cx="660.1" cy="93.0" r="3.1" fill="url(#ball)" stroke="#c07800" stroke-width="0.4"/><circle cx="689" cy="88.7" r="5.1" fill="#555" opacity="0.25"/><circle cx="688.3" cy="87.9" r="5.1" fill="url(#pt)" stroke="#b06000" stroke-width="0.5"/><path d="M731.5 82.5C731 80 727 79.6 723 80C717.5 80.6 716 83 717.5 85.3C719 87.5 727 88 728.5 91C729.8 93.8 726 95.6 721 95.7C717.5 95.8 715.5 94.8 715.3 92.8" fill="none" stroke="#222" stroke-width="3.6" stroke-linecap="round" transform="translate(0.7,0.9)" opacity="0.8"/><path d="M731.5 82.5C731 80 727 79.6 723 80C717.5 80.6 716 83 717.5 85.3C719 87.5 727 88 728.5 91C729.8 93.8 726 95.6 721 95.7C717.5 95.8 715.5 94.8 715.3 92.8" fill="none" stroke="#5a5000" stroke-width="3.4" stroke-linecap="round"/><path d="M731.5 82.5C731 80 727 79.6 723 80C717.5 80.6 716 83 717.5 85.3C719 87.5 727 88 728.5 91C729.8 93.8 726 95.6 721 95.7C717.5 95.8 715.5 94.8 715.3 92.8" fill="none" stroke="#f6d800" stroke-width="2.1" stroke-linecap="round"/><path d="M749.3 85.5L762 77.8V97.5L751.5 100L749.3 99Z" fill="#555"/><path d="M750.8 84.8L763.5 76.3H772.5L771.8 77.3H763L751.7 85.5Z" fill="#3a3a3a"/><path d="M751.7 85.5L762.9 78.6V96.7L751.9 99Z" fill="url(#fb)" stroke="#3a2a00" stroke-width="0.6"/><path d="M762.9 78.6L771.8 77.3L762.9 83.3Z" fill="#ffc22a" stroke="#3a2a00" stroke-width="0.6"/><path d="M762.9 83.3L771.8 79.5V84L762.9 89Z" fill="#f4f4f4" stroke="#3a3a3a" stroke-width="0.6"/><path d="M762.9 89L771.8 84V91.2L762.9 96.7Z" fill="url(#fb2)" stroke="#3a2a00" stroke-width="0.6"/><path d="M789.7 93.3C789 84 794 82 797.5 82C801 82 806 84 804.9 93.3" stroke="#555" stroke-opacity="0.45" stroke-width="2.6" fill="none" transform="translate(0.8,1)"/><path d="M789.7 93.3C789 84 794 82 797.5 82C801 82 806 84 804.9 93.3" stroke="#8a8a8a" stroke-width="2.6" fill="none"/><path d="M789.7 93.3C789 84 794 82 797.5 82C801 82 806 84 804.9 93.3" stroke="#fff" stroke-width="1.0" fill="none"/><path d="M789.7 93.3L791.3 79.1M804.9 93.3L803.2 79.1" stroke="#333" stroke-width="0.8"/><rect x="789.3" y="77.1" width="4" height="4" fill="url(#ball)"/><rect x="801.2" y="77.1" width="4" height="4" fill="url(#ball)"/><circle cx="790.6" cy="94.4" r="3.1" fill="#444" opacity="0.55"/><circle cx="789.7" cy="93.3" r="3.1" fill="url(#ball)" stroke="#c07800" stroke-width="0.4"/><circle cx="805.8" cy="94.4" r="3.1" fill="#444" opacity="0.55"/><circle cx="804.9" cy="93.3" r="3.1" fill="url(#ball)" stroke="#c07800" stroke-width="0.4"/></svg><div style="position:absolute;left:820px;top:85px;width:4px;height:1px;background:#d3cfc9;"></div><div style="position:absolute;left:820px;top:88px;width:4px;height:1px;background:#d3cfc9;"></div><div style="position:absolute;left:820px;top:91px;width:4px;height:1px;background:#d3cfc9;"></div><svg style="position:absolute;left:0;top:0;overflow:visible" width="1219" height="110"><path d="M845.9 77.2L850 81.5H847.5V85.5H851.5V83L856 87L851.5 91V88.5H847.5V92.5H850L845.9 97.3L841.8 92.5H844.3V88.5H840.3V91L835.7 87L840.3 83V85.5H844.3V81.5H841.8Z" transform="translate(1,1.2)" fill="#333" opacity="0.6"/><path d="M845.9 77.2L850 81.5H847.5V85.5H851.5V83L856 87L851.5 91V88.5H847.5V92.5H850L845.9 97.3L841.8 92.5H844.3V88.5H840.3V91L835.7 87L840.3 83V85.5H844.3V81.5H841.8Z" fill="url(#blu)" stroke="#0a2a80" stroke-width="0.5"/><path d="M875.2 87.3A6.8 6.8 0 1 0 885.4 82.1" stroke="#333" stroke-opacity="0.6" stroke-width="3.4" fill="none" transform="translate(1,1.2)"/><path d="M875.2 87.3A6.8 6.8 0 1 0 885.4 82.1" stroke="url(#blu)" stroke-width="3.4" fill="none"/><path d="M877.6 78.8L886.7 77.4L882.9 85.7Z" fill="#333" opacity="0.6" transform="translate(1,1.2)"/><path d="M877.6 78.8L886.7 77.4L882.9 85.7Z" fill="#3a78f0" stroke="#0a2a80" stroke-width="0.5"/><path d="M908 83.5L912 78H926V89C926 94 922 98 917 98.5V95.5C920 95 923 92 923 89V81H913ZM912.5 88C914 85.5 917 85 919.5 86V90C919.5 92 918.5 94 916.5 95V91.5C916.5 89.5 915 89 913.5 90Z" transform="translate(1,1.2)" fill="#333" opacity="0.6"/><path d="M908 83.5L912 78H926V89C926 94 922 98 917 98.5V95.5C920 95 923 92 923 89V81H913ZM912.5 88C914 85.5 917 85 919.5 86V90C919.5 92 918.5 94 916.5 95V91.5C916.5 89.5 915 89 913.5 90Z" fill="url(#blu)" stroke="#0a2a80" stroke-width="0.5"/><path d="M943.2 88L949 82.5V86.3H952.8V89.7H949V93.5Z M964.5 88L958.7 82.5V86.3H954.9V89.7H958.7V93.5Z" transform="translate(1,1.2)" fill="#333" opacity="0.6"/><path d="M943.2 88L949 82.5V86.3H952.8V89.7H949V93.5Z M964.5 88L958.7 82.5V86.3H954.9V89.7H958.7V93.5Z" fill="url(#blu)" stroke="#0a2a80" stroke-width="0.5"/><rect x="952.6" y="80" width="2.5" height="16" fill="#1a50d8" stroke="#0a2a80" stroke-width="0.4"/><path d="M989.6 77.2L999.3 88H994.7V97.9H985V88H979.8Z" transform="translate(1,1.2)" fill="#333" opacity="0.6"/><path d="M989.6 77.2L999.3 88H994.7V97.9H985V88H979.8Z" fill="url(#blu2)" stroke="#0a2a80" stroke-width="0.5"/><path d="M1021 77.7H1030.5V87.5H1035.5L1025.8 97.3L1016 87.5H1021Z" transform="translate(1,1.2)" fill="#333" opacity="0.6"/><path d="M1021 77.7H1030.5V87.5H1035.5L1025.8 97.3L1016 87.5H1021Z" fill="url(#blu2)" stroke="#0a2a80" stroke-width="0.5"/><rect x="1052.8" y="79.3" width="18.5" height="17.6" fill="none" stroke="#1a5af0" stroke-width="1.8" stroke-dasharray="2 1.6"/><rect x="1052.5" y="88.8" width="10" height="9" fill="#0a3ab0" stroke="#0a2a80" stroke-width="0.6"/><rect x="1055" y="91.3" width="5" height="4" fill="#e8e8e8"/><path d="M1063 88L1068 83.5L1066.5 82L1071 81L1070 85.5L1068.5 84L1064 89Z" fill="url(#blu)" stroke="#0a2a80" stroke-width="0.5"/><path d="M1101.7 77L1107.8 94.3L1092.4 97Z" fill="#333" opacity="0.5" transform="translate(1,1)"/><path d="M1101.7 77L1107.8 94.3L1092.4 97Z" fill="#0a18e8" stroke="#000" stroke-width="1.1" stroke-linejoin="round"/><path d="M1087 82.2L1090.8 78.6L1100.6 88.6L1100.2 92L1097 91.6Z" fill="#6aa0f0" stroke="#0a1a60" stroke-width="0.9"/><path d="M1088.8 80.4L1098.8 90.2" stroke="#2a60c0" stroke-width="0.7"/><path d="M1097 91.6L1100.2 92L1100.6 88.6Z" fill="#fff"/><path d="M1124.2 84.2L1131 78.8L1136 84.2L1143.2 79.7M1124.2 95C1127 91 1129 91 1132 92.5C1136 94.5 1139 94.5 1143 91.2" stroke="#555" stroke-opacity="0.35" stroke-width="3" fill="none" transform="translate(0.8,1)"/><path d="M1124.2 84.2L1131 78.8L1136 84.2L1143.2 79.7M1124.2 95C1127 91 1129 91 1132 92.5C1136 94.5 1139 94.5 1143 91.2" stroke="#8a8a8a" stroke-width="3" fill="none"/><path d="M1124.2 84.2L1131 78.8L1136 84.2L1143.2 79.7M1124.2 95C1127 91 1129 91 1132 92.5C1136 94.5 1139 94.5 1143 91.2" stroke="#fff" stroke-width="1.5" fill="none"/><path d="M1129.2 87.3L1137.8 86.9L1133.2 91Z" fill="#9a9a9a"/><path d="M1159.4 94.1H1180.6" stroke="#aaa" stroke-width="3"/><circle cx="1169.8" cy="94.1" r="3" fill="#a8a8a8" stroke="#8a8a8a" stroke-width="0.6"/><path d="M1169.8 79V88.5M1165 83.7H1174.6" stroke="#8f8f8f" stroke-width="3.2"/></svg><svg style="position:absolute;left:1204px;top:83px;overflow:visible" width="12" height="12" viewBox="0 0 12 12"><path d="M1.5 2L5 5.5L1.5 9M6 2L9.5 5.5L6 9" stroke="#000" stroke-width="1.8" fill="none"/></svg><div style="position:absolute;left:1.6px;top:114.16px;font-size:14.7px;line-height:14.7px;color:#3c3c3c;white-space:nowrap;">Combo View</div><svg style="position:absolute;left:290px;top:114px;overflow:visible" width="32" height="14" viewBox="0 0 32 14"><rect x="1.5" y="1.5" width="10" height="10" rx="2" fill="none" stroke="#7a7a7a" stroke-width="1"/><rect x="5" y="3.5" width="5" height="4.5" fill="none" stroke="#555" stroke-width="1.1"/><rect x="3.5" y="6" width="4.5" height="4" fill="#f2f1f0" stroke="#555" stroke-width="1.1"/><rect x="18.5" y="1.5" width="10" height="10" rx="2" fill="none" stroke="#7a7a7a" stroke-width="1"/><path d="M21 4L26 9M26 4L21 9" stroke="#555" stroke-width="2"/></svg><div style="position:absolute;left:0px;top:163px;width:321.6px;height:503.8px;box-sizing:border-box;border:1px solid #b9b4ad;border-left-color:#f0efee;border-radius:0 0 4px 0;background:#f5f5f4;"></div><div style="position:absolute;left:57.5px;top:136.2px;width:51px;height:26.8px;box-sizing:border-box;border:1px solid #b9b4ad;border-bottom:none;border-radius:4px 4px 0 0;background:linear-gradient(#f6f5f4,#dedcd8);"></div><div style="position:absolute;left:0px;top:133.6px;width:58px;height:30.4px;box-sizing:border-box;border:1px solid #b9b4ad;border-left-color:#f0efee;border-bottom:none;border-radius:4px 4px 0 0;background:linear-gradient(#fbfbfa,#f5f5f4);"></div><div style="position:absolute;left:7.5px;top:140.69px;font-size:14.9px;line-height:14.9px;color:#3c3c3c;white-space:nowrap;">Model</div><div style="position:absolute;left:65.7px;top:142.10px;font-size:14.3px;line-height:14.3px;color:#3c3c3c;white-space:nowrap;">Tasks</div><div style="position:absolute;left:1.2px;top:164px;width:319px;height:227.3px;box-sizing:border-box;border:1px solid #b9b4ad;background:#fff;"></div><div style="position:absolute;left:2.2px;top:165px;width:317px;height:24.8px;box-sizing:border-box;background:#f2f1f0;"></div><div style="position:absolute;left:2.2px;top:165px;width:179px;height:24.8px;box-sizing:border-box;border-bottom:1px solid #b9b4ad;border-right:1px solid #b9b4ad;background:linear-gradient(#ffffff,#efeeec);"></div><div style="position:absolute;left:6.7px;top:169.23px;font-size:15.2px;line-height:15.2px;color:#3c3c3c;white-space:nowrap;">Labels &amp; Attributes</div><div style="position:absolute;left:5.2px;top:191.85px;font-size:15.3px;line-height:15.3px;color:#3c3c3c;white-space:nowrap;">Application</div><svg style="position:absolute;left:10px;top:212px;overflow:visible" width="10" height="10" viewBox="0 0 10 10"><path d="M1.5 3H8.5L5 8.5Z" fill="#6e6e6e"/></svg><svg style="position:absolute;left:26px;top:210px;overflow:visible" width="14" height="16" viewBox="0 0 14 16"><rect x="0.8" y="0.8" width="11.6" height="14" fill="#ececec" stroke="#c4c4c4" stroke-width="0.8"/><path d="M12.5 14.8H0.8" stroke="#a0a0a0" stroke-width="0.8"/><circle cx="8.3" cy="6" r="3.3" fill="#e01818"/><path d="M3 8.5L8.3 7.3V13.5L3 14Z" fill="#2a48c8"/><path d="M8.3 7.3L10 8V13L8.3 13.5Z" fill="#18308a"/></svg><div style="position:absolute;left:47.4px;top:211.53px;font-size:14.5px;line-height:14.5px;color:#3c3c3c;white-space:nowrap;font-weight:bold;">F2-T14-ejemplo-ini</div><svg style="position:absolute;left:29px;top:232.4px;overflow:visible" width="10" height="10" viewBox="0 0 10 10"><path d="M2.5 1.5V8.5L7.5 5Z" fill="#6e6e6e"/></svg><svg style="position:absolute;left:44px;top:230.4px;overflow:visible" width="18" height="14" viewBox="0 0 18 14"><path d="M2 9.5L9 6L16 9.5L9 13Z" fill="none" stroke="#bbb" stroke-width="0.8"/><path d="M2 4.5L9 1.2L16 4.5V7.5L9 11L2 7.5Z" fill="#8a8a8a"/><path d="M2 4.5L9 1.2L16 4.5L9 8Z" fill="#b5b5b5"/></svg><div style="position:absolute;left:67.2px;top:230.29px;font-size:14.9px;line-height:14.9px;color:#a3a3a3;white-space:nowrap;">body</div><svg style="position:absolute;left:29px;top:251.39999999999998px;overflow:visible" width="10" height="10" viewBox="0 0 10 10"><path d="M2.5 1.5V8.5L7.5 5Z" fill="#6e6e6e"/></svg><svg style="position:absolute;left:44px;top:249.39999999999998px;overflow:visible" width="18" height="14" viewBox="0 0 18 14"><path d="M2 5L9 1.5L16 5V8.5L9 12L2 8.5Z" fill="#1a3ac0"/><path d="M2 5L9 1.5L16 5L9 8.5Z" fill="#3a6ae8"/><path d="M6.5 4.5L9 3.3L11.5 4.5L9 5.8Z" fill="#e02020"/></svg><div style="position:absolute;left:67.2px;top:249.29px;font-size:14.9px;line-height:14.9px;color:#2e2e2e;white-space:nowrap;">original-part</div><svg style="position:absolute;left:29px;top:270.3px;overflow:visible" width="10" height="10" viewBox="0 0 10 10"><path d="M2.5 1.5V8.5L7.5 5Z" fill="#6e6e6e"/></svg><svg style="position:absolute;left:44px;top:268.3px;overflow:visible" width="18" height="14" viewBox="0 0 18 14"><path d="M2 9.5L9 6L16 9.5L9 13Z" fill="none" stroke="#bbb" stroke-width="0.8"/><path d="M2 4.5L9 1.2L16 4.5V7.5L9 11L2 7.5Z" fill="#8a8a8a"/><path d="M2 4.5L9 1.2L16 4.5L9 8Z" fill="#b5b5b5"/></svg><div style="position:absolute;left:67.2px;top:268.19px;font-size:14.9px;line-height:14.9px;color:#a3a3a3;white-space:nowrap;">body001</div><svg style="position:absolute;left:29px;top:289.3px;overflow:visible" width="10" height="10" viewBox="0 0 10 10"><path d="M2.5 1.5V8.5L7.5 5Z" fill="#6e6e6e"/></svg><svg style="position:absolute;left:44px;top:287.3px;overflow:visible" width="18" height="14" viewBox="0 0 18 14"><path d="M2 5L9 1.5L16 5V8.5L9 12L2 8.5Z" fill="#1a3ac0"/><path d="M2 5L9 1.5L16 5L9 8.5Z" fill="#3a6ae8"/><path d="M6.5 4.5L9 3.3L11.5 4.5L9 5.8Z" fill="#e02020"/></svg><div style="position:absolute;left:67.2px;top:287.61px;font-size:14.4px;line-height:14.4px;color:#2e2e2e;white-space:nowrap;font-weight:bold;">copy-paste</div><svg style="position:absolute;left:155px;top:391px;overflow:visible" width="12" height="6" viewBox="0 0 12 6"><path d="M2.5 0.5V5.5M5.5 0.5V5.5M8.5 0.5V5.5" stroke="#c4c0ba" stroke-width="1"/></svg><div style="position:absolute;left:1.2px;top:397.6px;width:318.4px;height:237.6px;box-sizing:border-box;border:1px solid #b9b4ad;border-radius:3px;background:#f5f5f4;"></div><div style="position:absolute;left:3px;top:399.2px;width:314.8px;height:234.6px;box-sizing:border-box;border:1px solid #b9b4ad;background:#fff;"></div><div style="position:absolute;left:4px;top:400.2px;width:312.8px;height:24px;box-sizing:border-box;border-bottom:1px solid #b9b4ad;background:linear-gradient(#ffffff,#f0efed);"></div><div style="position:absolute;left:103px;top:400.2px;width:1px;height:23.5px;background:#d0ccc6;"></div><div style="position:absolute;left:8.2px;top:405.45px;font-size:15.3px;line-height:15.3px;color:#3c3c3c;white-space:nowrap;">Property</div><div style="position:absolute;left:108.3px;top:405.70px;font-size:15px;line-height:15px;color:#3c3c3c;white-space:nowrap;">Value</div><svg style="position:absolute;left:0px;top:634px;overflow:visible" width="110" height="34" viewBox="0 0 110 34"><path d="M51.2 3L59.2 27.3Q60.5 29.3 63 29.3H86Q88.3 29.3 89.2 27.3L96.6 3" fill="#f0efee" stroke="#444" stroke-width="0.9"/><path d="M1.2 1.4L10.2 28.5Q11.6 30.5 14.2 30.5H38Q40.3 30.5 41.3 28.5L50 1.4" fill="#fff" stroke="#444" stroke-width="0.9"/></svg><div style="position:absolute;left:9.9px;top:642.07px;font-size:14.8px;line-height:14.8px;color:#3c3c3c;white-space:nowrap;">View</div><div style="position:absolute;left:59.4px;top:642.24px;font-size:14.6px;line-height:14.6px;color:#3c3c3c;white-space:nowrap;">Data</div><svg style="position:absolute;left:322px;top:382px;overflow:visible" width="6" height="12" viewBox="0 0 6 12"><path d="M0.5 2.5H5.5M0.5 5.5H5.5M0.5 8.5H5.5" stroke="#c4c0ba" stroke-width="1"/></svg><svg width="859" height="526" viewBox="0 0 859 526" style="position:absolute;left:328px;top:108px"><defs><linearGradient id="bg" x1="0" y1="0" x2="0" y2="1"><stop offset="0" stop-color="#333364"/><stop offset="1" stop-color="#9797aa"/></linearGradient></defs><rect width="859" height="526" fill="url(#bg)"/><path d="M383.43 61.44L280.93 461.84M377.98 64.60L821.27 149.00M387.87 62.29L285.37 462.69M376.95 68.61L820.25 153.01M392.30 63.13L289.80 463.53M375.92 72.61L819.22 157.01M396.73 63.98L294.23 464.38M374.90 76.62L818.20 161.02M401.16 64.82L298.66 465.22M373.88 80.62L817.17 165.02M405.60 65.66L303.10 466.06M372.85 84.62L816.15 169.02M410.03 66.51L307.53 466.91M371.83 88.63L815.12 173.03M414.46 67.35L311.96 467.75M370.80 92.63L814.10 177.03M418.90 68.20L316.40 468.60M369.77 96.64L813.08 181.04M427.76 69.88L325.26 470.28M367.73 104.64L811.02 189.04M432.20 70.73L329.70 471.13M366.70 108.65L810.00 193.05M436.63 71.57L334.13 471.97M365.67 112.65L808.97 197.05M441.06 72.42L338.56 472.82M364.65 116.66L807.95 201.06M445.50 73.26L343.00 473.66M363.62 120.66L806.92 205.06M449.93 74.10L347.43 474.50M362.60 124.66L805.90 209.06M454.36 74.95L351.86 475.35M361.58 128.67L804.88 213.07M458.79 75.79L356.29 476.19M360.55 132.67L803.85 217.07M463.23 76.64L360.73 477.04M359.52 136.68L802.83 221.08M472.09 78.32L369.59 478.72M357.48 144.68L800.77 229.08M476.53 79.17L374.03 479.57M356.45 148.69L799.75 233.09M480.96 80.01L378.46 480.41M355.42 152.69L798.72 237.09M485.39 80.86L382.89 481.26M354.40 156.70L797.70 241.10M489.83 81.70L387.33 482.10M353.38 160.70L796.67 245.10M494.26 82.54L391.76 482.94M352.35 164.70L795.65 249.10M498.69 83.39L396.19 483.79M351.33 168.71L794.62 253.11M503.12 84.23L400.62 484.63M350.30 172.71L793.60 257.11M507.56 85.08L405.06 485.48M349.27 176.72L792.58 261.12M516.42 86.76L413.92 487.16M347.23 184.72L790.52 269.12M520.86 87.61L418.36 488.01M346.20 188.73L789.50 273.13M525.29 88.45L422.79 488.85M345.17 192.73L788.47 277.13M529.72 89.30L427.22 489.70M344.15 196.74L787.45 281.14M534.15 90.14L431.65 490.54M343.12 200.74L786.42 285.14M538.59 90.98L436.09 491.38M342.10 204.74L785.40 289.14M543.02 91.83L440.52 492.23M341.08 208.75L784.38 293.15M547.45 92.67L444.95 493.07M340.05 212.75L783.35 297.15M551.89 93.52L449.39 493.92M339.02 216.76L782.33 301.16M560.75 95.20L458.25 495.60M336.98 224.76L780.27 309.16M565.19 96.05L462.69 496.45M335.95 228.77L779.25 313.17M569.62 96.89L467.12 497.29M334.92 232.77L778.22 317.17M574.05 97.74L471.55 498.14M333.90 236.78L777.20 321.18M578.49 98.58L475.99 498.98M332.88 240.78L776.17 325.18M582.92 99.42L480.42 499.82M331.85 244.78L775.15 329.18M587.35 100.27L484.85 500.67M330.83 248.79L774.12 333.19M591.78 101.11L489.28 501.51M329.80 252.79L773.10 337.19M596.22 101.96L493.72 502.36M328.77 256.80L772.08 341.20M605.08 103.64L502.58 504.04M326.73 264.80L770.02 349.20M609.52 104.49L507.02 504.89M325.70 268.81L769.00 353.21M613.95 105.33L511.45 505.73M324.67 272.81L767.97 357.21M618.38 106.18L515.88 506.58M323.65 276.82L766.95 361.22M622.82 107.02L520.32 507.42M322.62 280.82L765.92 365.22M627.25 107.86L524.75 508.26M321.60 284.82L764.90 369.22M631.68 108.71L529.18 509.11M320.58 288.83L763.88 373.23M636.11 109.55L533.61 509.95M319.55 292.83L762.85 377.23M640.55 110.40L538.05 510.80M318.52 296.84L761.83 381.24M649.41 112.08L546.91 512.48M316.48 304.84L759.77 389.24M653.85 112.93L551.35 513.33M315.45 308.85L758.75 393.25M658.28 113.77L555.78 514.17M314.42 312.85L757.72 397.25M662.71 114.62L560.21 515.02M313.40 316.86L756.70 401.26M667.14 115.46L564.64 515.86M312.38 320.86L755.67 405.26M671.58 116.30L569.08 516.70M311.35 324.86L754.65 409.26M676.01 117.15L573.51 517.55M310.33 328.87L753.62 413.27M680.44 117.99L577.94 518.39M309.30 332.87L752.60 417.27M684.88 118.84L582.38 519.24M308.27 336.88L751.58 421.28M693.74 120.52L591.24 520.92M306.23 344.88L749.52 429.28M698.18 121.37L595.68 521.77M305.20 348.89L748.50 433.29M702.61 122.21L600.11 522.61M304.17 352.89L747.47 437.29M707.04 123.06L604.54 523.46M303.15 356.90L746.45 441.30M711.47 123.90L608.97 524.30M302.12 360.90L745.42 445.30M715.91 124.74L613.41 525.14M301.10 364.90L744.40 449.30M720.34 125.59L617.84 525.99M300.08 368.91L743.38 453.31M724.77 126.43L622.27 526.83M299.05 372.91L742.35 457.31M729.21 127.28L626.71 527.68M298.02 376.92L741.33 461.32M738.07 128.96L635.57 529.36M295.98 384.92L739.27 469.32M742.51 129.81L640.01 530.21M294.95 388.93L738.25 473.33M746.94 130.65L644.44 531.05M293.92 392.93L737.22 477.33M751.37 131.50L648.87 531.90M292.90 396.94L736.20 481.34M755.81 132.34L653.31 532.74M291.88 400.94L735.17 485.34M760.24 133.18L657.74 533.58M290.85 404.94L734.15 489.34M764.67 134.03L662.17 534.43M289.83 408.95L733.12 493.35M769.10 134.87L666.60 535.27M288.80 412.95L732.10 497.35M773.54 135.72L671.04 536.12M287.77 416.96L731.08 501.36M782.40 137.40L679.90 537.80M285.73 424.96L729.02 509.36M786.84 138.25L684.34 538.65M284.70 428.97L728.00 513.37M791.27 139.09L688.77 539.49M283.67 432.97L726.97 517.37M795.70 139.94L693.20 540.34M282.65 436.98L725.95 521.38M800.13 140.78L697.63 541.18M281.62 440.98L724.92 525.38M804.57 141.62L702.07 542.02M280.60 444.98L723.90 529.38M809.00 142.47L706.50 542.87M279.58 448.99L722.88 533.39M813.43 143.31L710.93 543.71M278.55 452.99L721.85 537.39M817.87 144.16L715.37 544.56M277.52 457.00L720.83 541.40" stroke="#30304a" stroke-opacity="0.5" stroke-width="0.65" fill="none"/><path d="M379.00 60.60L276.50 461.00M379.00 60.60L822.30 145.00M423.33 69.04L320.83 469.44M368.75 100.64L812.05 185.04M467.66 77.48L365.16 477.88M358.50 140.68L801.80 225.08M511.99 85.92L409.49 486.32M348.25 180.72L791.55 265.12M556.32 94.36L453.82 494.76M338.00 220.76L781.30 305.16M600.65 102.80L498.15 503.20M327.75 260.80L771.05 345.20M644.98 111.24L542.48 511.64M317.50 300.84L760.80 385.24M689.31 119.68L586.81 520.08M307.25 340.88L750.55 425.28M733.64 128.12L631.14 528.52M297.00 380.92L740.30 465.32M777.97 136.56L675.47 536.96M286.75 420.96L730.05 505.36M822.30 145.00L719.80 545.40M276.50 461.00L719.80 545.40" stroke="#2a2a40" stroke-opacity="0.7" stroke-width="1.0" fill="none"/><g fill="#0c0c72" stroke="#1c1b1c" stroke-width="2" stroke-linejoin="round"><polygon fill="#030333" points="288.70,92.50 278.20,177.90 279.80,198.30 290.30,112.90"/><polygon fill="#07076c" points="367.00,189.70 309.10,225.80 310.70,246.20 368.60,210.10"/><polygon fill="#070772" points="358.30,275.80 265.90,256.50 267.50,276.90 359.90,296.20"/><polygon fill="#080874" points="265.90,256.50 135.50,294.00 137.10,314.40 267.50,276.90"/><polygon fill="#080874" points="154.00,178.50 109.20,173.70 110.80,194.10 155.60,198.90"/><polygon fill="#070773" points="187.90,185.30 290.30,204.30 291.90,224.70 189.50,205.70"/><polygon fill="#04043d" points="169.90,257.50 187.90,185.30 189.50,205.70 171.50,277.90"/></g><path d="M151.60,112.40 L223.60,173.10 L288.70,92.50 L278.20,177.90 L367.00,189.70 L309.10,225.80 L358.30,275.80 L265.90,256.50 L135.50,294.00 L154.00,178.50 L109.20,173.70Z M187.90,185.30 L290.30,204.30 L284.50,228.90 L196.90,212.90 L185.50,260.10 L169.90,257.50Z" fill="#0707eb" fill-rule="evenodd" stroke="#1c1b1c" stroke-width="2" stroke-linejoin="round"/><g fill="#0c0c72" stroke="#1c1b1c" stroke-width="2" stroke-linejoin="round"><polygon fill="#030333" points="596.60,147.10 586.10,232.50 587.70,252.90 598.20,167.50"/><polygon fill="#07076c" points="674.90,244.30 617.00,280.40 618.60,300.80 676.50,264.70"/><polygon fill="#070772" points="666.20,330.40 573.80,311.10 575.40,331.50 667.80,350.80"/><polygon fill="#080874" points="573.80,311.10 443.40,348.60 445.00,369.00 575.40,331.50"/><polygon fill="#080874" points="461.90,233.10 417.10,228.30 418.70,248.70 463.50,253.50"/><polygon fill="#070773" points="495.80,239.90 598.20,258.90 599.80,279.30 497.40,260.30"/><polygon fill="#04043d" points="477.80,312.10 495.80,239.90 497.40,260.30 479.40,332.50"/></g><path d="M459.50,167.00 L531.50,227.70 L596.60,147.10 L586.10,232.50 L674.90,244.30 L617.00,280.40 L666.20,330.40 L573.80,311.10 L443.40,348.60 L461.90,233.10 L417.10,228.30Z M495.80,239.90 L598.20,258.90 L592.40,283.50 L504.80,267.50 L493.40,314.70 L477.80,312.10Z" fill="#0707eb" fill-rule="evenodd" stroke="#1c1b1c" stroke-width="2" stroke-linejoin="round"/><g transform="translate(833.5,499.6)"><path d="M0 0L16.5 3.2" stroke="#8a1a1a" stroke-width="2"/><path d="M17.5 3.4L11 0.5L11.5 5Z" fill="#8a1a1a"/><path d="M0 0L3 -13.5" stroke="#1a8a1a" stroke-width="1.8"/><path d="M3.3 -14L0.8 -8.5L5 -8Z" fill="#1a8a1a"/><path d="M-1 0L-1.5 -9.5" stroke="#1a1a9a" stroke-width="2.2"/><path d="M-1.5 -10.5L-3.8 -5L1 -5Z" fill="#1a1a9a"/><path d="M5.5 -20.7L8 -17.2L10.5 -20.7M8 -17.2V-13.8" stroke="#000" stroke-width="1.1" fill="none"/><path d="M20.5 -2.5L25.3 3.9M25.3 -2.5L20.5 3.9" stroke="#000" stroke-width="1.1" fill="none"/></g></svg><svg style="position:absolute;left:1195px;top:111px;overflow:visible" width="14" height="7" viewBox="0 0 14 7"><path d="M3.5 0.5V5.5M6.5 0.5V5.5M9.5 0.5V5.5" stroke="#c4c0ba" stroke-width="1"/></svg><div style="position:absolute;left:1190.3px;top:120px;width:23.6px;height:23.5px;box-sizing:border-box;border:1px solid #bdb8b1;border-radius:4px;background:linear-gradient(#f3f2f0,#d9d6d1);"></div><svg style="position:absolute;left:1190px;top:120px;overflow:visible" width="24" height="24" viewBox="0 0 24 24"><rect x="6.5" y="10" width="11" height="9" fill="#20a888" stroke="#0a5a48" stroke-width="0.8"/><path d="M8.5 10V7.5A3.5 3.5 0 0 1 15.5 7.5V10" fill="none" stroke="#0a5a48" stroke-width="2"/><path d="M7 14.5H17" stroke="#7ad0b8" stroke-width="1"/></svg><div style="position:absolute;left:1190.3px;top:146px;width:23.6px;height:23.5px;box-sizing:border-box;border:1px solid #bdb8b1;border-radius:4px;background:linear-gradient(#f3f2f0,#d9d6d1);"></div><svg style="position:absolute;left:1190px;top:146px;overflow:visible" width="24" height="24" viewBox="0 0 24 24"><path d="M5 18.5L19 5.5" stroke="#0a5a48" stroke-width="3.4" stroke-linecap="round"/><path d="M5 18.5L19 5.5" stroke="#10a080" stroke-width="2"/><circle cx="12" cy="12" r="3.6" fill="#10a080" stroke="#0a5a48" stroke-width="0.8"/></svg><div style="position:absolute;left:1190.3px;top:172px;width:23.6px;height:23.5px;box-sizing:border-box;border:1px solid #bdb8b1;border-radius:4px;background:linear-gradient(#ffffff,#f6f5f4 60%,#eceae7);"></div><svg style="position:absolute;left:1190px;top:172px;overflow:visible" width="24" height="24" viewBox="0 0 24 24"><path d="M12 4.5V17M5 17.5H19" stroke="#0a5a48" stroke-width="3.6"/><path d="M12 4.5V17M5 17.5H19" stroke="#10a080" stroke-width="2.2"/></svg><div style="position:absolute;left:1190.3px;top:198px;width:23.6px;height:23.5px;box-sizing:border-box;border:1px solid #bdb8b1;border-radius:4px;background:linear-gradient(#f3f2f0,#d9d6d1);"></div><svg style="position:absolute;left:1190px;top:198px;overflow:visible" width="24" height="24" viewBox="0 0 24 24"><path d="M8 4.5V19.5M16 4.5V19.5M4.5 8H19.5M4.5 16H19.5" stroke="#0a5a48" stroke-width="3.2"/><path d="M8 4.5V19.5M16 4.5V19.5M4.5 8H19.5M4.5 16H19.5" stroke="#10a080" stroke-width="2"/><rect x="9.5" y="9.5" width="5" height="5" fill="#fff"/></svg><div style="position:absolute;left:1190.3px;top:224px;width:23.6px;height:23.5px;box-sizing:border-box;border:1px solid #bdb8b1;border-radius:4px;background:linear-gradient(#ffffff,#f6f5f4 60%,#eceae7);"></div><svg style="position:absolute;left:1190px;top:224px;overflow:visible" width="24" height="24" viewBox="0 0 24 24"><path d="M5.5 5.5L18.5 18.5M18.5 5.5L5.5 18.5" stroke="#0a5a48" stroke-width="4.2"/><path d="M5.5 5.5L18.5 18.5M18.5 5.5L5.5 18.5" stroke="#10a080" stroke-width="2.8"/></svg><div style="position:absolute;left:1190.3px;top:250px;width:23.6px;height:23.5px;box-sizing:border-box;border:1px solid #bdb8b1;border-radius:4px;background:linear-gradient(#ffffff,#f6f5f4 60%,#eceae7);"></div><svg style="position:absolute;left:1190px;top:250px;overflow:visible" width="24" height="24" viewBox="0 0 24 24"><path d="M4.5 12.5L16.5 5.5M7.5 18.5L19.5 11.5" stroke="#0a5a48" stroke-width="3.6"/><path d="M4.5 12.5L16.5 5.5M7.5 18.5L19.5 11.5" stroke="#10a080" stroke-width="2.2"/></svg><div style="position:absolute;left:1190.3px;top:276px;width:23.6px;height:23.5px;box-sizing:border-box;border:1px solid #bdb8b1;border-radius:4px;background:linear-gradient(#f3f2f0,#d9d6d1);"></div><svg style="position:absolute;left:1190px;top:276px;overflow:visible" width="24" height="24" viewBox="0 0 24 24"><path d="M8 16L18.5 5.5" stroke="#0a5a48" stroke-width="3" /><path d="M8 16L18.5 5.5" stroke="#10a080" stroke-width="1.8"/><circle cx="7.5" cy="16.5" r="3" fill="#10a080" stroke="#0a5a48" stroke-width="0.8"/></svg><div style="position:absolute;left:1190.3px;top:302px;width:23.6px;height:23.5px;box-sizing:border-box;border:1px solid #bdb8b1;border-radius:4px;background:linear-gradient(#ffffff,#f6f5f4 60%,#eceae7);"></div><svg style="position:absolute;left:1190px;top:302px;overflow:visible" width="24" height="24" viewBox="0 0 24 24"><path d="M12 5.5L18.5 12L12 18.5L5.5 12Z" fill="none" stroke="#0a5a48" stroke-width="1.4"/><circle cx="12" cy="6" r="2.7" fill="#10a080" stroke="#0a5a48" stroke-width="0.7"/><circle cx="18" cy="12" r="2.7" fill="#10a080" stroke="#0a5a48" stroke-width="0.7"/><circle cx="12" cy="18" r="2.7" fill="#10a080" stroke="#0a5a48" stroke-width="0.7"/><circle cx="6" cy="12" r="2.7" fill="#10a080" stroke="#0a5a48" stroke-width="0.7"/></svg><div style="position:absolute;left:1190.3px;top:328px;width:23.6px;height:23.5px;box-sizing:border-box;border:1px solid #bdb8b1;border-radius:4px;background:linear-gradient(#f3f2f0,#d9d6d1);"></div><svg style="position:absolute;left:1190px;top:328px;overflow:visible" width="24" height="24" viewBox="0 0 24 24"><circle cx="12" cy="12" r="6.8" fill="none" stroke="#10a080" stroke-width="2.6"/><circle cx="12" cy="12" r="3" fill="none" stroke="#10a080" stroke-width="2.2"/></svg><div style="position:absolute;left:1190.3px;top:354px;width:23.6px;height:23.5px;box-sizing:border-box;border:1px solid #bdb8b1;border-radius:4px;background:linear-gradient(#ffffff,#f6f5f4 60%,#eceae7);"></div><svg style="position:absolute;left:1190px;top:354px;overflow:visible" width="24" height="24" viewBox="0 0 24 24"><circle cx="6" cy="12" r="2.2" fill="#10a080"/><circle cx="12" cy="12" r="2.2" fill="#10a080"/><circle cx="18" cy="12" r="2.2" fill="#10a080"/></svg><div style="position:absolute;left:1190.3px;top:380px;width:23.6px;height:23.5px;box-sizing:border-box;border:1px solid #bdb8b1;border-radius:4px;background:linear-gradient(#ffffff,#f6f5f4 60%,#eceae7);"></div><svg style="position:absolute;left:1190px;top:380px;overflow:visible" width="24" height="24" viewBox="0 0 24 24"><path d="M5.5 12.2L16.7 17.4" stroke="#0a5a48" stroke-width="3.6" stroke-linecap="round"/><path d="M5.5 12.2L16.7 17.4" stroke="#10a080" stroke-width="2.2" stroke-linecap="round"/><circle cx="15.2" cy="8.2" r="2.1" fill="#10a080" stroke="#0a5a48" stroke-width="0.7"/></svg><div style="position:absolute;left:1190.3px;top:406px;width:23.6px;height:23.5px;box-sizing:border-box;border:1px solid #bdb8b1;border-radius:4px;background:linear-gradient(#ffffff,#f6f5f4 60%,#eceae7);"></div><svg style="position:absolute;left:1190px;top:406px;overflow:visible" width="24" height="24" viewBox="0 0 24 24"><path d="M12.2 6.6V16.6M7.2 11.6H17.2" stroke="#0a5a48" stroke-width="4"/><path d="M12.2 7V16.2M7.6 11.6H16.8" stroke="#10a080" stroke-width="2.6"/></svg><div style="position:absolute;left:1190.3px;top:432px;width:23.6px;height:23.5px;box-sizing:border-box;border:1px solid #bdb8b1;border-radius:4px;background:linear-gradient(#ffffff,#f6f5f4 60%,#eceae7);"></div><svg style="position:absolute;left:1190px;top:432px;overflow:visible" width="24" height="24" viewBox="0 0 24 24"><path d="M9.2 8.8V17.7M9.2 8.8H18.2M18.2 8.8V11M6.5 17.7H11" stroke="#10a080" stroke-width="1.2" fill="none"/><text x="12" y="7.6" font-size="4.5" font-weight="bold" fill="#0a5a48" font-family="Liberation Sans">1,00</text><text x="7.6" y="17" font-size="4.5" font-weight="bold" fill="#0a5a48" font-family="Liberation Sans" transform="rotate(-90 7.6 17)">1,00</text></svg><div style="position:absolute;left:1190.3px;top:458px;width:23.6px;height:23.5px;box-sizing:border-box;border:1px solid #bdb8b1;border-radius:4px;background:linear-gradient(#ffffff,#f6f5f4 60%,#eceae7);"></div><svg style="position:absolute;left:1190px;top:458px;overflow:visible" width="24" height="24" viewBox="0 0 24 24"><rect x="5.5" y="5.2" width="13.4" height="14.2" fill="#10a080" stroke="#0a5a48" stroke-width="1"/><circle cx="10" cy="14.2" r="1.4" fill="none" stroke="#0a5a48" stroke-width="0.9"/></svg><div style="position:absolute;left:328.4px;top:633.5px;width:214px;height:33.2px;box-sizing:border-box;border:1px solid #b9b4ad;border-top:none;border-radius:0 0 4px 4px;background:linear-gradient(#ffffff,#ffffff 60%,#f5f4f3);"></div><svg style="position:absolute;left:334px;top:641px;overflow:visible" width="18" height="17" viewBox="0 0 18 17"><path d="M2 2H9.5V4.8H5V7.2H8.5V9.8H5V14.5H2Z" fill="#f03010" stroke="#b02008" stroke-width="0.4"/><circle cx="10.5" cy="10" r="4.6" fill="none" stroke="#1a3aa8" stroke-width="2" stroke-dasharray="1.8 1.8"/><circle cx="10.5" cy="10" r="3.8" fill="#2a50c0"/><circle cx="10.5" cy="10" r="1.4" fill="#fff"/></svg><div style="position:absolute;left:359.3px;top:643.73px;font-size:14.5px;line-height:14.5px;color:#3c3c3c;white-space:nowrap;">F2-T14-ejemplo-ini : 1*</div><svg style="position:absolute;left:517px;top:644px;overflow:visible" width="16" height="15" viewBox="0 0 16 15"><path d="M3.2 3.2L12.8 12.3M12.8 3.2L3.2 12.3" stroke="#666" stroke-width="3.4" stroke-linecap="round"/></svg><div style="position:absolute;left:322px;top:666.6px;width:895px;height:1px;background:#d6d2cc;"></div><div style="position:absolute;left:0px;top:666.6px;width:1217px;height:1px;background:#d6d2cc;"></div><div style="position:absolute;left:5.2px;top:674.33px;font-size:15.2px;line-height:15.2px;color:#3c3c3c;white-space:nowrap;">Valid</div><div style="position:absolute;right:27px;top:676.13px;font-size:14.5px;line-height:14.5px;color:#3c3c3c;white-space:nowrap;">188.54 x 115.45 mm</div><svg style="position:absolute;left:1203px;top:682px;overflow:visible" width="14" height="14" viewBox="0 0 14 14"><rect x="10" y="10" width="1.2" height="1.2" fill="#c8c4be"/><rect x="10" y="8" width="1.2" height="1.2" fill="#c8c4be"/><rect x="10" y="6" width="1.2" height="1.2" fill="#c8c4be"/><rect x="10" y="4" width="1.2" height="1.2" fill="#c8c4be"/><rect x="10" y="2" width="1.2" height="1.2" fill="#c8c4be"/></svg></body></html>
